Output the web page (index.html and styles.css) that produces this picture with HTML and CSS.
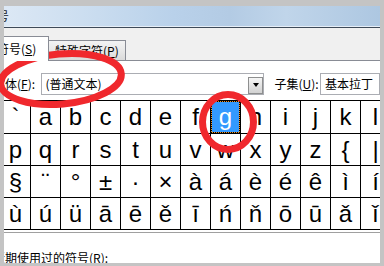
FILE: index.html
```html
<!DOCTYPE html>
<html lang="zh-CN">
<head>
  <meta charset="UTF-8">
  <meta name="viewport" content="width=device-width, initial-scale=1.0">
  <title>符号</title>
  <link rel="stylesheet" href="styles.css">
</head>
<body>
  <div class="screen">
    <div class="window">
      <div class="titlebar"><span class="title">符号</span></div>
      <div class="titlebar-edge"></div>
      <div class="tabstrip">
        <div class="tab active">符号(<u>S</u>)</div>
        <div class="tab">特殊字符(<u>P</u>)</div>
      </div>
      <div class="panel">
        <div class="font-row">
          <span class="label font-label">字体(<u>F</u>):</span>
          <div class="combo font-combo">
            <span class="combo-text">(普通文本)</span>
            <span class="drop"><span class="arrow"></span></span>
          </div>
          <span class="label subset-label">子集(<u>U</u>):</span>
          <div class="combo subset-combo">
            <span class="combo-text">基本拉丁</span>
          </div>
        </div>
        <div class="char-grid" id="char-grid">
          <!-- cells are filled in below -->
        </div>
        <div class="divider"></div>
        <div class="recent">近期使用过的符号(<u>R</u>):</div>
      </div>
    </div>
  </div>
  <svg class="marks" width="384" height="266" viewBox="0 0 384 266">
    <ellipse cx="61" cy="79" rx="60.5" ry="25" transform="rotate(-5 61 79)" />
    <ellipse cx="228" cy="122" rx="25.5" ry="27.5" />
  </svg>
  <script>
    // visible part of the symbol table
    const rows = [
      ["`", "a", "b", "c", "d", "e", "f", "g", "h", "i", "j", "k", "l"],
      ["p", "q", "r", "s", "t", "u", "v", "w", "x", "y", "z", "{", "|"],
      ["§", "¨", "°", "±", "·", "×", "à", "á", "è", "é", "ê", "ì", "í"],
      ["ù", "ú", "ü", "ā", "ē", "ě", "ī", "ń", "ň", "ō", "ū", "ǎ", "ǐ"]
    ];
    const selected = "g";

    const grid = document.getElementById("char-grid");
    rows.forEach(row => {
      row.forEach(ch => {
        const cell = document.createElement("div");
        cell.className = ch === selected ? "cell selected" : "cell";
        cell.textContent = ch;
        grid.appendChild(cell);
      });
    });
  </script>
</body>
</html>
```

FILE: styles.css
```css
body {
  margin: 0;
  width: 384px;
  height: 266px;
  overflow: hidden;
  position: relative;
  background-color: #c4c4c4;
  font-family: "Noto Sans CJK SC", "Noto Sans", sans-serif;
  font-size: 12px;
  color: #000;
}
u {
  text-decoration-thickness: 1px;
  text-underline-offset: 1px;
}
.screen {
  padding: 6px 4px 0 4px;
}
.window {
  width: 376px;
  height: 257px;
  overflow: hidden;
  background-color: #f0f0f0;
}

/* title bar */
.titlebar {
  height: 20px;
  border-bottom: 1px solid #e6eef7;
  background: linear-gradient(to right, #dce8f5 0%, #c9dcef 25%, #b9d1ea 45%, #b3cbe4 60%, #c0d5ea 75%, #adc7e1 100%);
  white-space: nowrap;
}
.title {
  display: inline-block;
  margin-left: -19px;
  line-height: 20px;
  color: #1e1e1e;
}
.titlebar-edge {
  height: 1px;
  background-color: #3e4a58;
}

/* tabs */
.tabstrip {
  height: 32px;
  display: flex;
  align-items: flex-end;
  white-space: nowrap;
}
.tab {
  box-sizing: border-box;
  height: 20px;
  width: 78px;
  padding-left: 6px;
  line-height: 19px;
  border: 1px solid #898c95;
  border-bottom: none;
  background: linear-gradient(#f3f3f3, #e8e8e8 50%, #dadada);
}
.tab.active {
  position: relative;
  z-index: 1;
  height: 25px;
  width: 55px;
  padding-left: 2px;
  margin-left: -10px;
  margin-bottom: -1px;
  margin-right: -1px;
  line-height: 24px;
  background: #fff;
}

/* panel */
.panel {
  height: 202px;
  background-color: #fff;
  border-top: 1px solid #898c95;
}
.font-row {
  display: flex;
  align-items: center;
  margin-top: 12px;
  height: 22px;
  white-space: nowrap;
}
.label {
  line-height: 16px;
}
.font-label {
  margin-left: -11px;
  width: 50px;
}
.subset-label {
  margin-left: 10px;
  width: 47px;
}
.combo {
  box-sizing: border-box;
  height: 22px;
  border: 1px solid #abadb3;
  background: #fff;
  display: flex;
  align-items: center;
}
.font-combo {
  width: 230px;
}
.subset-combo {
  width: 60px;
  flex-shrink: 0;
}
.combo-text {
  flex: 1;
  padding-left: 3px;
  line-height: 18px;
}
.subset-combo .combo-text {
  padding-left: 4px;
}
.drop {
  box-sizing: border-box;
  width: 15px;
  height: 17px;
  margin-top: 2px;
  border: 1px solid #8e8f8f;
  background: linear-gradient(#f6f6f6, #e3e3e3 50%, #d2d2d2);
  display: flex;
  align-items: center;
  justify-content: center;
}
.arrow {
  width: 0;
  height: 0;
  border-left: 3.5px solid transparent;
  border-right: 3.5px solid transparent;
  border-top: 4px solid #000;
}

/* symbol grid */
.char-grid {
  display: grid;
  grid-template-columns: repeat(13, 29px);
  grid-template-rows: 32px 31px 31px 31px;
  column-gap: 1px;
  row-gap: 1px;
  padding: 1px 0;
  margin-top: 5px;
  margin-left: -3px;
  width: 389px;
  background-color: #000;
}
.cell {
  background-color: #fff;
  font-family: "Liberation Sans", Arial, sans-serif;
  font-size: 24px;
  display: flex;
  align-items: center;
  justify-content: center;
  line-height: 1;
}
.cell.selected {
  background-color: #3399ff;
  color: #fff;
  box-shadow: inset 0 0 0 1px #f09020;
  outline: 1px dotted #000;
  outline-offset: -1px;
}
.divider {
  margin-top: 2px;
  height: 1px;
  background-color: #a0a0a0;
}
.recent {
  margin-top: 18px;
  margin-left: -11px;
  line-height: 14px;
  white-space: nowrap;
}

/* red annotation rings */
.marks {
  position: absolute;
  top: 0;
  left: 0;
  pointer-events: none;
}
.marks ellipse {
  fill: none;
  stroke: #f0282d;
  stroke-width: 7;
}
```
